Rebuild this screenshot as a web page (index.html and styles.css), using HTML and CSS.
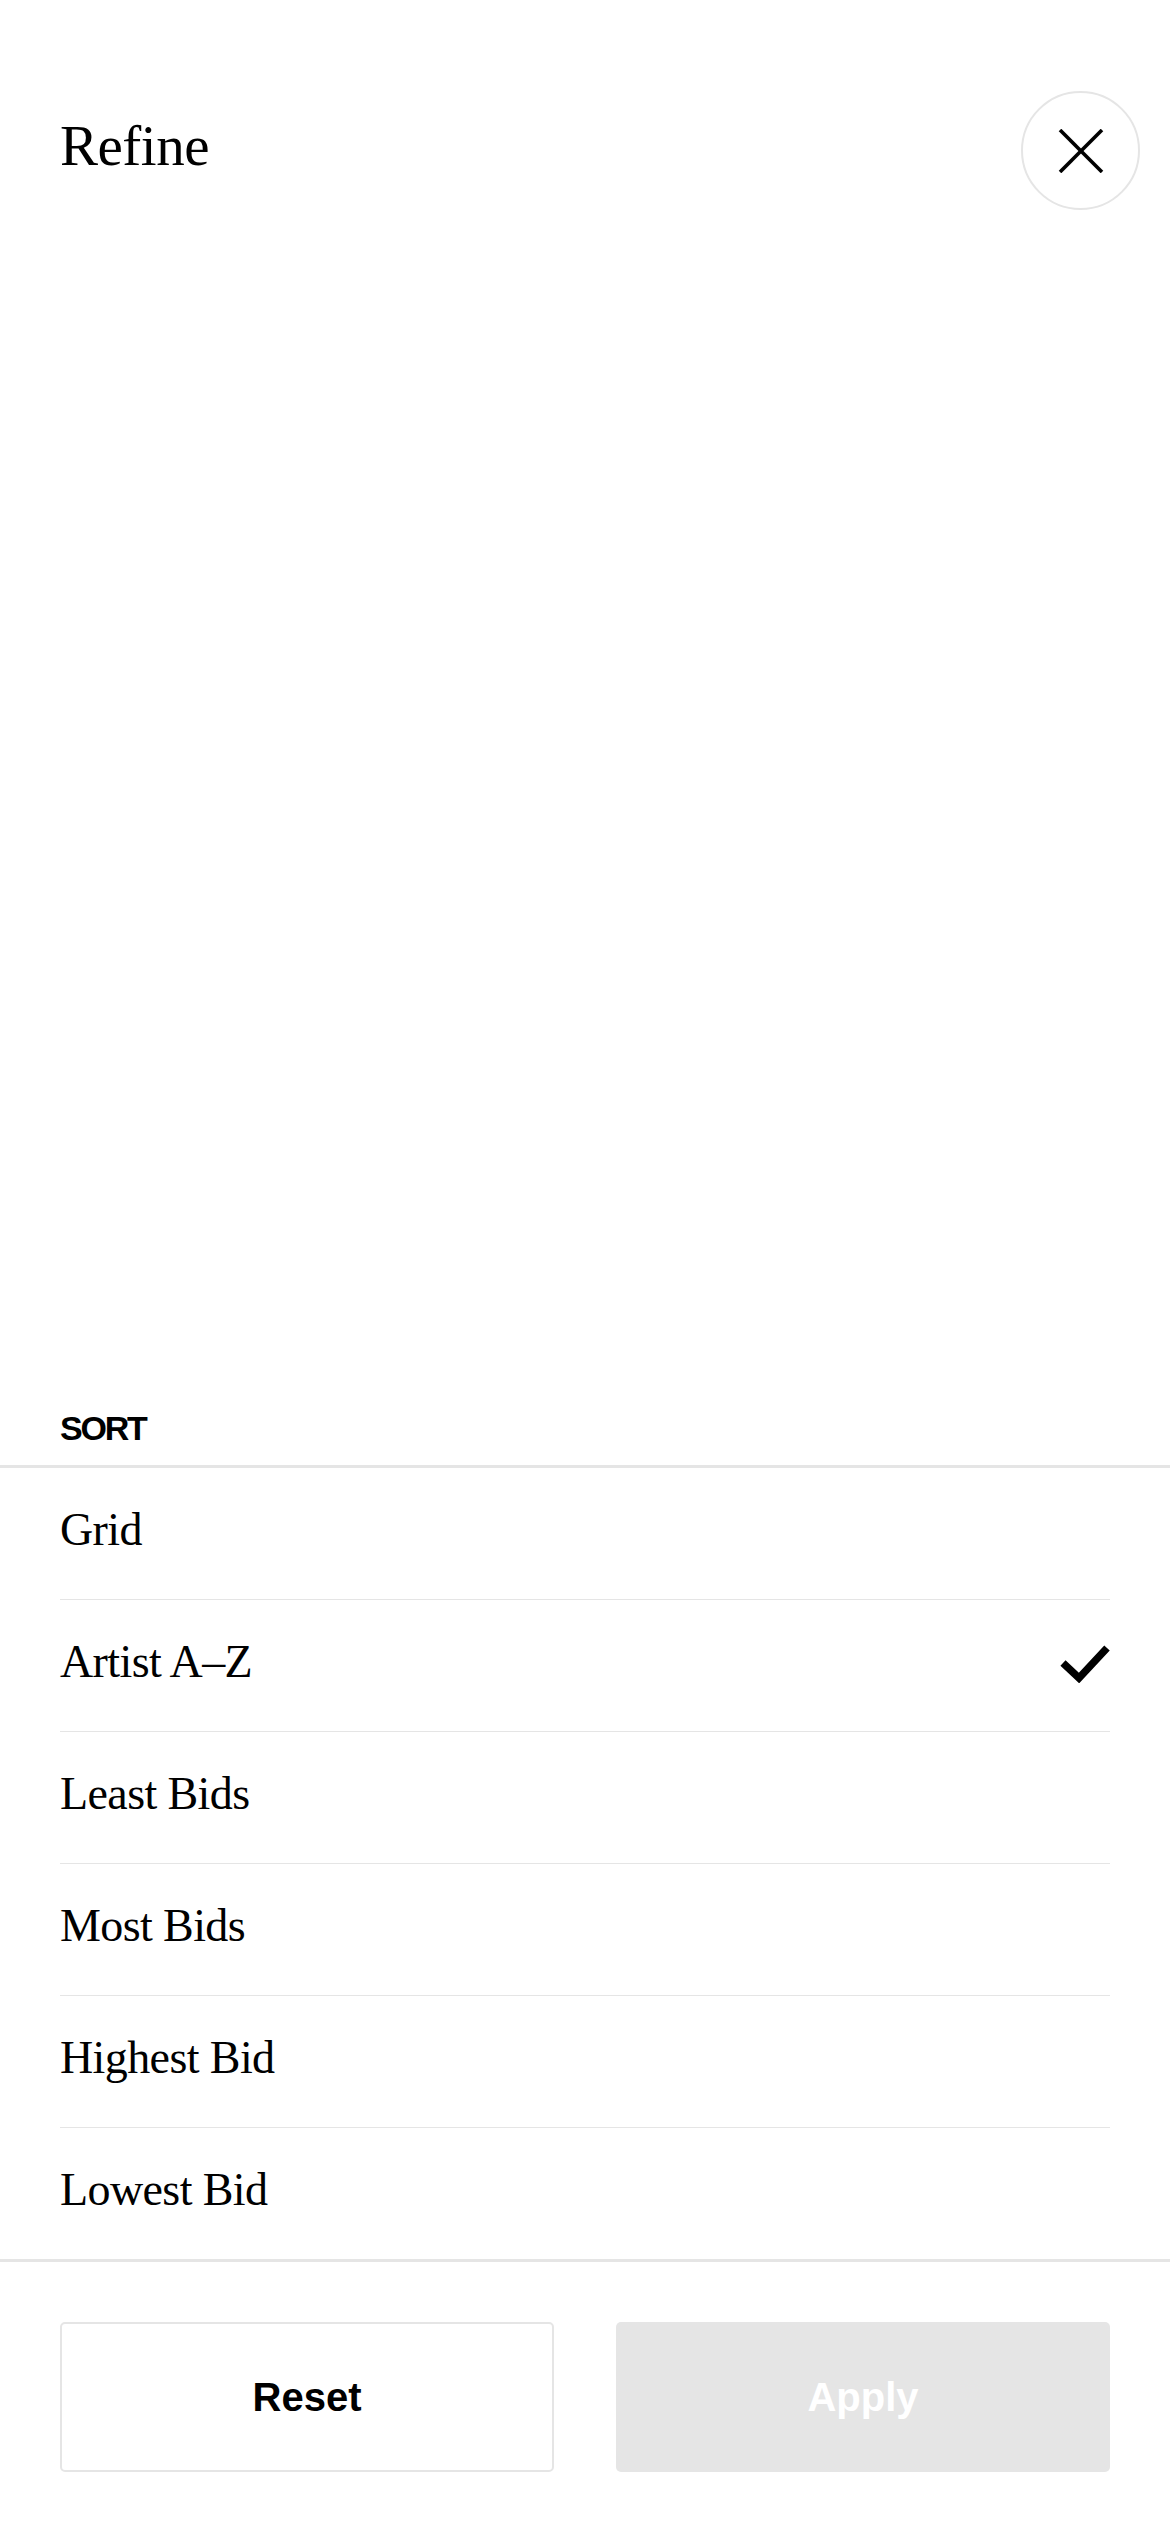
FILE: index.html
```html
<!DOCTYPE html>
<html lang="en">
<head>
<meta charset="utf-8">
<title>Refine</title>
<link rel="stylesheet" href="styles.css">
</head>
<body>
<div class="page">
  <header class="header">
    <h1 class="title">Refine</h1>
    <button class="close" aria-label="Close">
      <svg width="46" height="44" viewBox="0 0 46 44" fill="none" stroke="#000" stroke-width="3.6">
        <line x1="2" y1="1" x2="44" y2="43"/>
        <line x1="44" y1="1" x2="2" y2="43"/>
      </svg>
    </button>
  </header>
  <div class="spacer"></div>
  <section class="sort">
    <div class="sort-label">SORT</div>
    <ul class="options">
      <li class="option"><span>Grid</span></li>
      <li class="option"><span>Artist A–Z</span>
        <svg class="check" width="50" height="40" viewBox="0 0 50 40" fill="none" stroke="#000" stroke-width="7.5" stroke-linejoin="miter">
          <polyline points="3,20 19,35 47,5"/>
        </svg>
      </li>
      <li class="option"><span>Least Bids</span></li>
      <li class="option"><span>Most Bids</span></li>
      <li class="option"><span>Highest Bid</span></li>
      <li class="option"><span>Lowest Bid</span></li>
    </ul>
    <div class="actions">
      <button class="btn btn-reset">Reset</button>
      <button class="btn btn-apply">Apply</button>
    </div>
  </section>
</div>
</body>
</html>
```
FILE: styles.css
```css
* { box-sizing: border-box; }
html, body {
  margin: 0;
  padding: 0;
  background: #fff;
  color: #000;
}
.page {
  width: 1170px;
  height: 2532px;
  display: flex;
  flex-direction: column;
}
.header {
  display: flex;
  align-items: center;
  justify-content: space-between;
  padding: 91px 30px 0 60px;
}
.title {
  margin: 0;
  font-family: "Liberation Serif", "Times New Roman", serif;
  font-weight: 400;
  font-size: 57px;
  letter-spacing: -0.5px;
  line-height: 1;
  margin-top: -11px;
}
.close {
  width: 119px;
  height: 119px;
  border-radius: 50%;
  border: 2px solid #e5e5e5;
  background: #fff;
  display: flex;
  align-items: center;
  justify-content: center;
  padding: 0;
}
.spacer { flex: 1; }
.sort-label {
  font-family: "Liberation Sans", Arial, sans-serif;
  font-weight: 700;
  font-size: 34px;
  letter-spacing: -2.2px;
  line-height: 1;
  padding: 0 60px 20px;
  border-bottom: 3px solid #e5e5e5;
}
.options {
  list-style: none;
  margin: 0;
  padding: 0 60px;
  border-bottom: 3px solid #e5e5e5;
}
.option {
  height: 132px;
  display: flex;
  align-items: center;
  justify-content: space-between;
  border-bottom: 1px solid #e5e5e5;
  font-family: "Liberation Serif", "Times New Roman", serif;
  font-size: 46px;
  letter-spacing: -0.6px;
  padding-bottom: 8px;
}
.option:last-child { border-bottom: none; height: 131px; }
.check { margin-top: 2px; }
.actions {
  display: grid;
  grid-template-columns: 1fr 1fr;
  gap: 62px;
  padding: 60px 60px 60px;
}
.btn {
  height: 150px;
  border-radius: 5px;
  font-family: "Liberation Sans", Arial, sans-serif;
  font-weight: 700;
  font-size: 40px;
  padding: 0;
}
.btn-reset {
  background: #fff;
  border: 2.5px solid #e5e5e5;
  color: #000;
}
.btn-apply {
  background: #e5e5e5;
  border: none;
  color: #fff;
}
```
